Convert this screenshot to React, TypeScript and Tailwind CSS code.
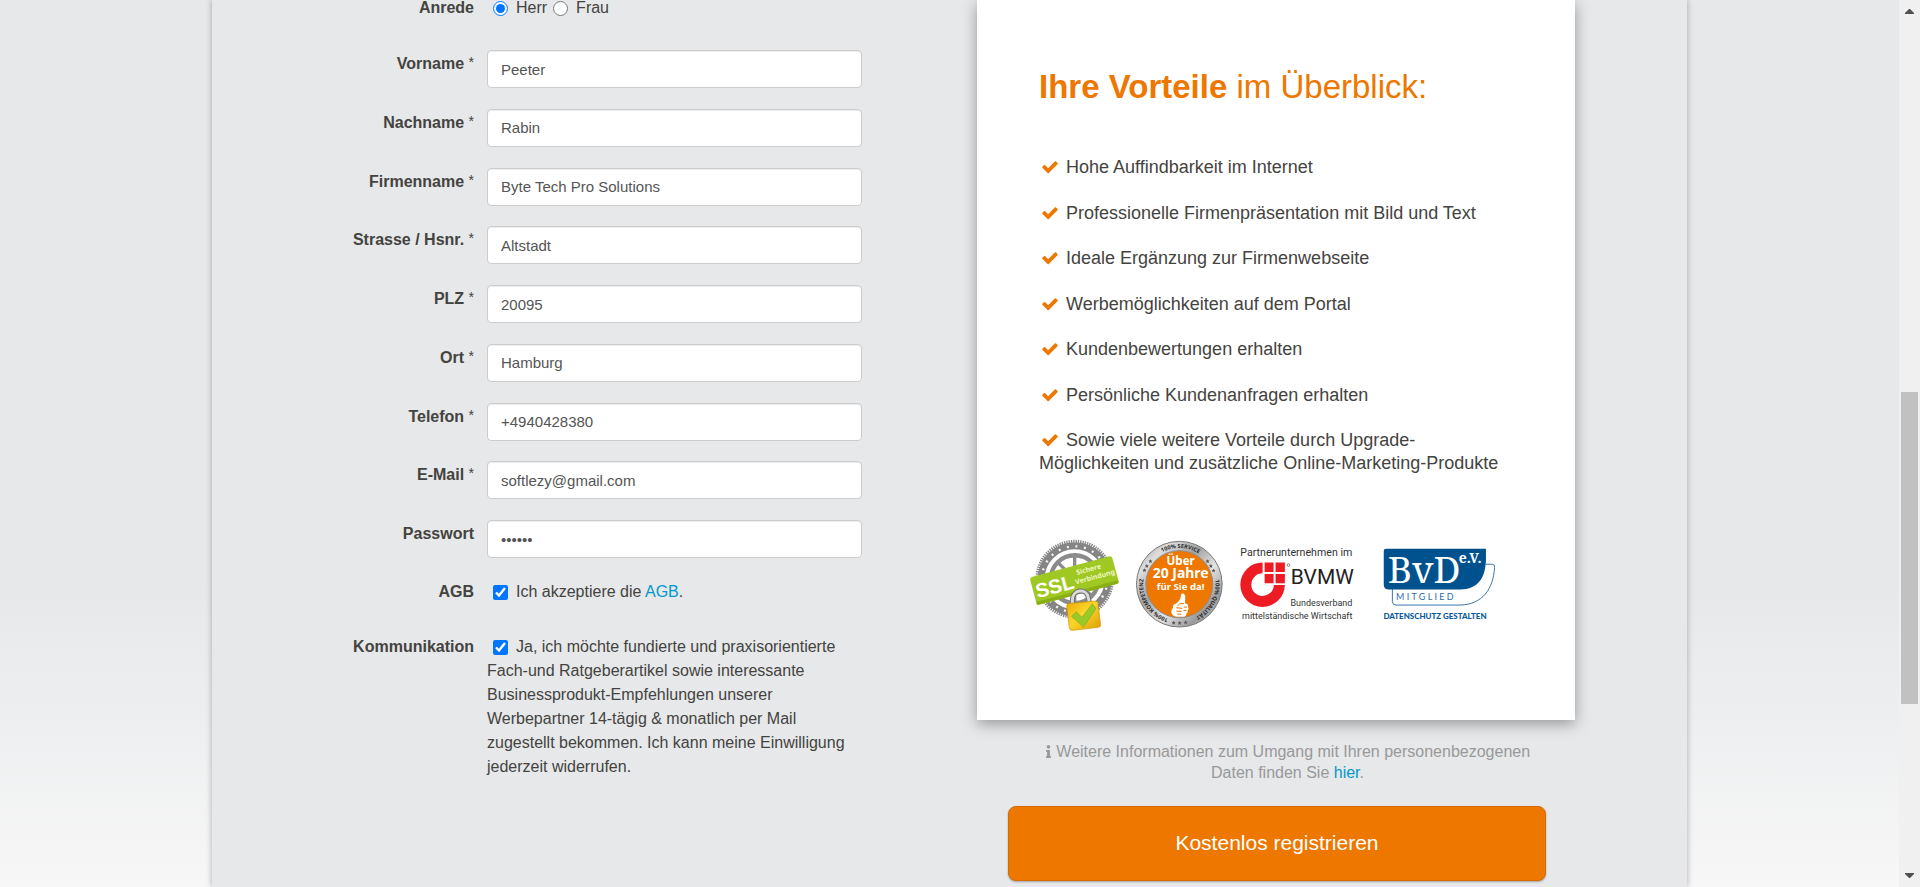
import React from "react";
import { FaInfo } from "react-icons/fa";

type Field = { id: string; label: string; value: string; type?: string; required?: boolean };

const fields: Field[] = [
  { id: "vorname", label: "Vorname", value: "Peeter", required: true },
  { id: "nachname", label: "Nachname", value: "Rabin", required: true },
  { id: "firmenname", label: "Firmenname", value: "Byte Tech Pro Solutions", required: true },
  { id: "strasse", label: "Strasse / Hsnr.", value: "Altstadt", required: true },
  { id: "plz", label: "PLZ", value: "20095", required: true },
  { id: "ort", label: "Ort", value: "Hamburg", required: true },
  { id: "telefon", label: "Telefon", value: "+4940428380", required: true },
  { id: "email", label: "E-Mail", value: "softlezy@gmail.com", type: "email", required: true },
  { id: "passwort", label: "Passwort", value: "secret", type: "password" },
];

const benefits = [
  "Hohe Auffindbarkeit im Internet",
  "Professionelle Firmenpräsentation mit Bild und Text",
  "Ideale Ergänzung zur Firmenwebseite",
  "Werbemöglichkeiten auf dem Portal",
  "Kundenbewertungen erhalten",
  "Persönliche Kundenanfragen erhalten",
  "Sowie viele weitere Vorteile durch Upgrade-Möglichkeiten und zusätzliche Online-Marketing-Produkte",
];

function Check() {
  return (
    <svg viewBox="100 300 1592 1300" className="mr-2 ml-[3px] inline-block h-[13px] w-4 align-[-1px]" fill="#ee7700" aria-hidden="true">
      <path d="M1671 566q0 40-28 68l-724 724-136 136q-28 28-68 28t-68-28l-136-136-362-362q-28-28-28-68t28-68l136-136q28-28 68-28t68 28l294 295 656-657q28-28 68-28t68 28l136 136q28 28 28 68z" />
    </svg>
  );
}

function SslLogo() {
  const spokes = [0, 45, 90, 135, 180, 225, 270, 315];
  return (
    <svg viewBox="30 24 270 280" className="h-[93px] w-[90px]" role="img" aria-label="SSL Sichere Verbindung">
      <defs>
        <linearGradient id="lock" x1="0" y1="0" x2="1" y2="1">
          <stop offset="0" stopColor="#e9a800" />
          <stop offset="0.45" stopColor="#fcd62c" />
          <stop offset="1" stopColor="#dd9a00" />
        </linearGradient>
      </defs>
      <circle cx="167" cy="145" r="114" fill="none" stroke="#858585" strokeWidth="9" strokeDasharray="4 3" />
      <circle cx="167" cy="145" r="101" fill="none" stroke="#858585" strokeWidth="21" />
      <circle cx="167" cy="145" r="99" fill="none" stroke="#f4f4f4" strokeWidth="7" strokeDasharray="6 20" />
      <circle cx="167" cy="145" r="72" fill="none" stroke="#8b8b8b" strokeWidth="13" />
      {spokes.map((a) => (
        <path key={a} d="M162 68v50h10v-50z" fill="#8b8b8b" transform={`rotate(${a} 167 145)`} />
      ))}
      <circle cx="167" cy="145" r="30" fill="none" stroke="#8b8b8b" strokeWidth="10" />
      <g transform="rotate(-15 165 149)">
        <rect x="38" y="106" width="256" height="86" rx="9" fill="#9fc822" />
        <rect x="38" y="182" width="256" height="10" rx="5" fill="#8bb016" />
        <text x="46" y="172" fontFamily="Liberation Sans, sans-serif" fontWeight="700" fontSize="60" fill="#fff">SSL</text>
        <text x="178" y="135" fontFamily="Noto Sans, sans-serif" fontWeight="700" fontSize="21" fill="#eef7c4">Sichere</text>
        <text x="168" y="162" fontFamily="Noto Sans, sans-serif" fontWeight="700" fontSize="21" fill="#eef7c4">Verbindung</text>
      </g>
      <path d="M160 222v-14c0-32 42-38 48-8l3 14" fill="none" stroke="#6f6f6f" strokeWidth="15" />
      <path d="M160 222v-14c0-32 42-38 48-8l3 14" fill="none" stroke="#d9d9d9" strokeWidth="9" />
      <path d="M143 227q0-8 8-9l76-7q9-1 10 8l8 62q1 8-7 9l-77 9q-9 1-10-8z" fill="url(#lock)" stroke="#cc8f00" strokeWidth="2" />
      <path d="M158 257l14-14 17 17 31-41 11 15-37 55z" fill="#9aca28" stroke="#7fae17" strokeWidth="2" />
    </svg>
  );
}

function TwentyYearsBadge() {
  const stars = [
    [373, 121], [380, 108], [391, 94], [563, 94], [573, 108], [581, 122], [461, 279], [479, 280], [497, 278],
  ];
  return (
    <svg viewBox="345 30 264 268" className="h-[89px] w-[88px]" role="img" aria-label="Über 20 Jahre für Sie da!">
      <defs>
        <linearGradient id="ring" x1="0" y1="0" x2="1" y2="1">
          <stop offset="0" stopColor="#8e8e8e" />
          <stop offset="0.2" stopColor="#dedede" />
          <stop offset="0.4" stopColor="#a2a2a2" />
          <stop offset="0.6" stopColor="#e4e4e4" />
          <stop offset="0.8" stopColor="#9a9a9a" />
          <stop offset="1" stopColor="#cfcfcf" />
        </linearGradient>
        <path id="badgeCircle" d="M478 272a109 109 0 0 1 0-218a109 109 0 0 1 0 218" />
      </defs>
      <circle cx="478" cy="163" r="129" fill="url(#ring)" stroke="#777" strokeWidth="3" />
      <circle cx="478" cy="163" r="101" fill="#ee7700" stroke="#8d8d8d" strokeWidth="3" />
      <g fontFamily="Open Sans, sans-serif" fontWeight="700" fontSize="17" fill="#2b2b2b">
        <text><textPath href="#badgeCircle" startOffset="34">100% KOMPETENZ</textPath></text>
        <text><textPath href="#badgeCircle" startOffset="288">100% SERVICE</textPath></text>
        <text><textPath href="#badgeCircle" startOffset="500">100% QUALITÄT</textPath></text>
      </g>
      {stars.map(([x, y]) => (
        <path key={`${x}-${y}`} d="M0-6l2 4 4 0-3 3 1 5-4-3-4 3 1-5-3-3 4 0z" fill="#555" transform={`translate(${x} ${y})`} />
      ))}
      <g fontFamily="Noto Sans, sans-serif" fontWeight="700" fill="#fff" textAnchor="middle">
        <text x="482" y="105" fontSize="35">Über</text>
        <text x="482" y="145" fontSize="42">20 Jahre</text>
        <text x="482" y="180" fontSize="29">für Sie da!</text>
      </g>
      <path d="M484 192q10-4 12 9l-1 20q10-1 9 9 4 7-1 12 2 7-4 10 0 8-8 9h-20q-16-1-17-14-1-8 5-13-2-10 8-12 15-8 17-30z" fill="#fff" />
      <path d="M492 221q-15-2-20 8m-3 5l18 2m-18 8l16 1m-13 8l12 1m7-22h10m-11 10h9" fill="none" stroke="#ee7700" strokeWidth="3" />
    </svg>
  );
}

function BvmwLogo() {
  return (
    <svg viewBox="28 50 346 222" className="h-[74px] w-[115px]" role="img" aria-label="Partnerunternehmen im BVMW">
      <g fontFamily="Roboto, sans-serif" fill="#333">
        <text x="32" y="77" fontSize="32">Partnerunternehmen im</text>
        <text x="184" y="160" fontSize="63" fill="#222">BVMW</text>
        <text x="369" y="227" fontSize="27" textAnchor="end">Bundesverband</text>
        <text x="369" y="266" fontSize="27" textAnchor="end">mittelständische Wirtschaft</text>
      </g>
      <circle cx="177" cy="104" r="4" fill="none" stroke="#555" strokeWidth="2" />
      <path d="M99 96V129A34 34 0 1 0 133 164H166A67 67 0 1 1 99 96z" fill="#ed1c24" />
      <path d="M105 96h27v29h-27zM138 96h28v29h-28zM105 131h27v28h-27zM138 131h28v28h-28z" fill="#ed1c24" />
    </svg>
  );
}

function BvdLogo() {
  return (
    <svg viewBox="456 54 344 220" className="h-[73px] w-[115px]" role="img" aria-label="BvD e.V. Mitglied Datenschutz gestalten">
      <path d="M768 106h19q8 0 7 9c-4 66-36 112-104 114H497q-10 0-11-10v-40" fill="none" stroke="#3a75ad" strokeWidth="3" />
      <path d="M467 59h301v28c0 60-24 94-78 95H475q-15 0-15-15V66q0-7 7-7z" fill="#00528f" />
      <g fill="#fff" fontFamily="Noto Serif, Liberation Serif, serif">
        <text x="472" y="163" fontSize="112">BvD</text>
        <text x="686" y="103" fontSize="42" fontWeight="700">e.V.</text>
      </g>
      <text x="497" y="213" fontSize="27" letterSpacing="7" fontFamily="Lato, sans-serif" fill="#2f6ca6">MITGLIED</text>
      <text x="459" y="270" fontSize="24" fontWeight="900" fontFamily="Lato, sans-serif" fill="#0a5a9c">DATENSCHUTZ GESTALTEN</text>
    </svg>
  );
}

function Scrollbar() {
  return (
    <div className="flex w-[21px] shrink-0 flex-col items-center bg-[#f0f0f0] py-[9px]" aria-hidden="true">
      <svg viewBox="0 0 9 5" className="h-[5px] w-[9px]" fill="#505050"><path d="M4 0h1l4 4v1H0V4z" /></svg>
      <div className="grow-[378]" />
      <div className="w-[17px] grow-[312] bg-[#c1c1c1]" />
      <div className="grow-[169]" />
      <svg viewBox="0 0 9 5" className="h-[5px] w-[9px]" fill="#505050"><path d="M0 0h9v1L5 5H4L0 1z" /></svg>
    </div>
  );
}

const labelCol = "w-[262px] shrink-0 text-right font-bold";

export default function App() {
  return (
    <div className="flex h-screen overflow-hidden bg-[linear-gradient(to_bottom,#e6e8ea_0%,#e6e8ea_66%,#f7f7f7_100%)] font-['Liberation_Sans',Arial,sans-serif] text-base text-[#444340]">
      <main className="flex min-w-0 grow justify-center">
        <form
          className="flex h-full w-full max-w-[1475px] bg-[#e6e8ea] shadow-[0_0_6px_rgba(0,0,0,0.3)]"
          onSubmit={(e) => e.preventDefault()}
        >
          <div className="-mt-1 w-[650px] shrink-0 leading-6">
            <div className="mb-[30px] flex gap-[13px]" role="radiogroup" aria-labelledby="anrede">
              <span id="anrede" className={labelCol}>Anrede</span>
              <div className="flex items-center pl-1.5">
                <input id="herr" type="radio" name="anrede" defaultChecked className="mr-2 size-[15px]" />
                <label htmlFor="herr" className="mr-1.5">Herr</label>
                <input id="frau" type="radio" name="anrede" className="mr-2 size-[15px]" />
                <label htmlFor="frau">Frau</label>
              </div>
            </div>

            <div className="flex min-h-[508px] flex-col justify-between">
              {fields.map((f) => (
                <div key={f.id} className="flex gap-[13px]">
                  <label htmlFor={f.id} className="w-[262px] shrink-0 pt-0.5 text-right font-bold">
                    {f.label}
                    {f.required && <span className="font-normal"> <sup className="-top-0.5 text-sm">*</sup></span>}
                  </label>
                  <input
                    id={f.id}
                    type={f.type ?? "text"}
                    defaultValue={f.value}
                    className="h-[38px] min-w-0 grow rounded border border-[#cccccc] bg-white px-[13px] text-[15px] text-[#555555] shadow-[inset_0_1px_1px_rgba(0,0,0,0.075)]"
                  />
                </div>
              ))}
            </div>

            <div className="mt-[22px] flex gap-[13px]">
              <span className={labelCol}>AGB</span>
              <div className="grow">
                <input id="agb" type="checkbox" defaultChecked className="mr-2 ml-1.5 size-[15px] align-[-3px]" />
                <label htmlFor="agb">Ich akzeptiere die </label>
                <a href="#agb" className="text-[#0099cc]">AGB</a>.
              </div>
            </div>
            <div className="mt-[31px] flex gap-[13px]">
              <span className={labelCol}>Kommunikation</span>
              <div className="grow">
                <input id="kommunikation" type="checkbox" defaultChecked className="mr-2 ml-1.5 size-[15px] align-[-3px]" />
                <label htmlFor="kommunikation">
                  Ja, ich möchte fundierte und praxisorientierte Fach-und Ratgeberartikel sowie interessante
                  Businessprodukt-Empfehlungen unserer Werbepartner 14-tägig &amp; monatlich per Mail zugestellt
                  bekommen. Ich kann meine Einwilligung jederzeit widerrufen.
                </label>
              </div>
            </div>
          </div>

          <div className="ml-[115px] w-[598px] shrink-0">
            <section className="bg-white px-[62px] pt-[67px] pb-[88px] shadow-[0_4px_14px_rgba(0,0,0,0.35)]">
              <h2 className="text-[33px] leading-10 text-[#ee7700]">
                <strong>Ihre Vorteile</strong> im Überblick:
              </h2>
              <ul className="mt-[49px] flex min-h-[319px] flex-col justify-between text-lg leading-[23px]">
                {benefits.map((b) => (
                  <li key={b}><Check />{b}</li>
                ))}
              </ul>
              <div className="-ml-2.5 mt-16 flex h-[93px] items-start">
                <SslLogo />
                <div className="ml-4 mt-px"><TwentyYearsBadge /></div>
                <div className="ml-4 mt-2"><BvmwLogo /></div>
                <div className="ml-7 mt-2"><BvdLogo /></div>
              </div>
            </section>

            <p className="mt-[21px] pr-8 pl-[55px] text-center leading-[21px] text-[#999999]">
              <FaInfo className="inline h-[13px] w-[7px] align-[-1px]" /> Weitere Informationen zum Umgang mit Ihren
              personenbezogenen Daten finden Sie <a href="#hier" className="text-[#0099cc]">hier</a>.
            </p>
            <div className="pr-[29px] pl-[31px]">
              <button
                type="submit"
                className="mt-[23px] h-[75px] w-full rounded-lg border border-[#d66b00] bg-[#ee7700] pb-0.5 text-[21px] text-white shadow-[0_1px_2px_rgba(0,0,0,0.3)]"
              >
                Kostenlos registrieren
              </button>
            </div>
          </div>
        </form>
      </main>
      <Scrollbar />
    </div>
  );
}
